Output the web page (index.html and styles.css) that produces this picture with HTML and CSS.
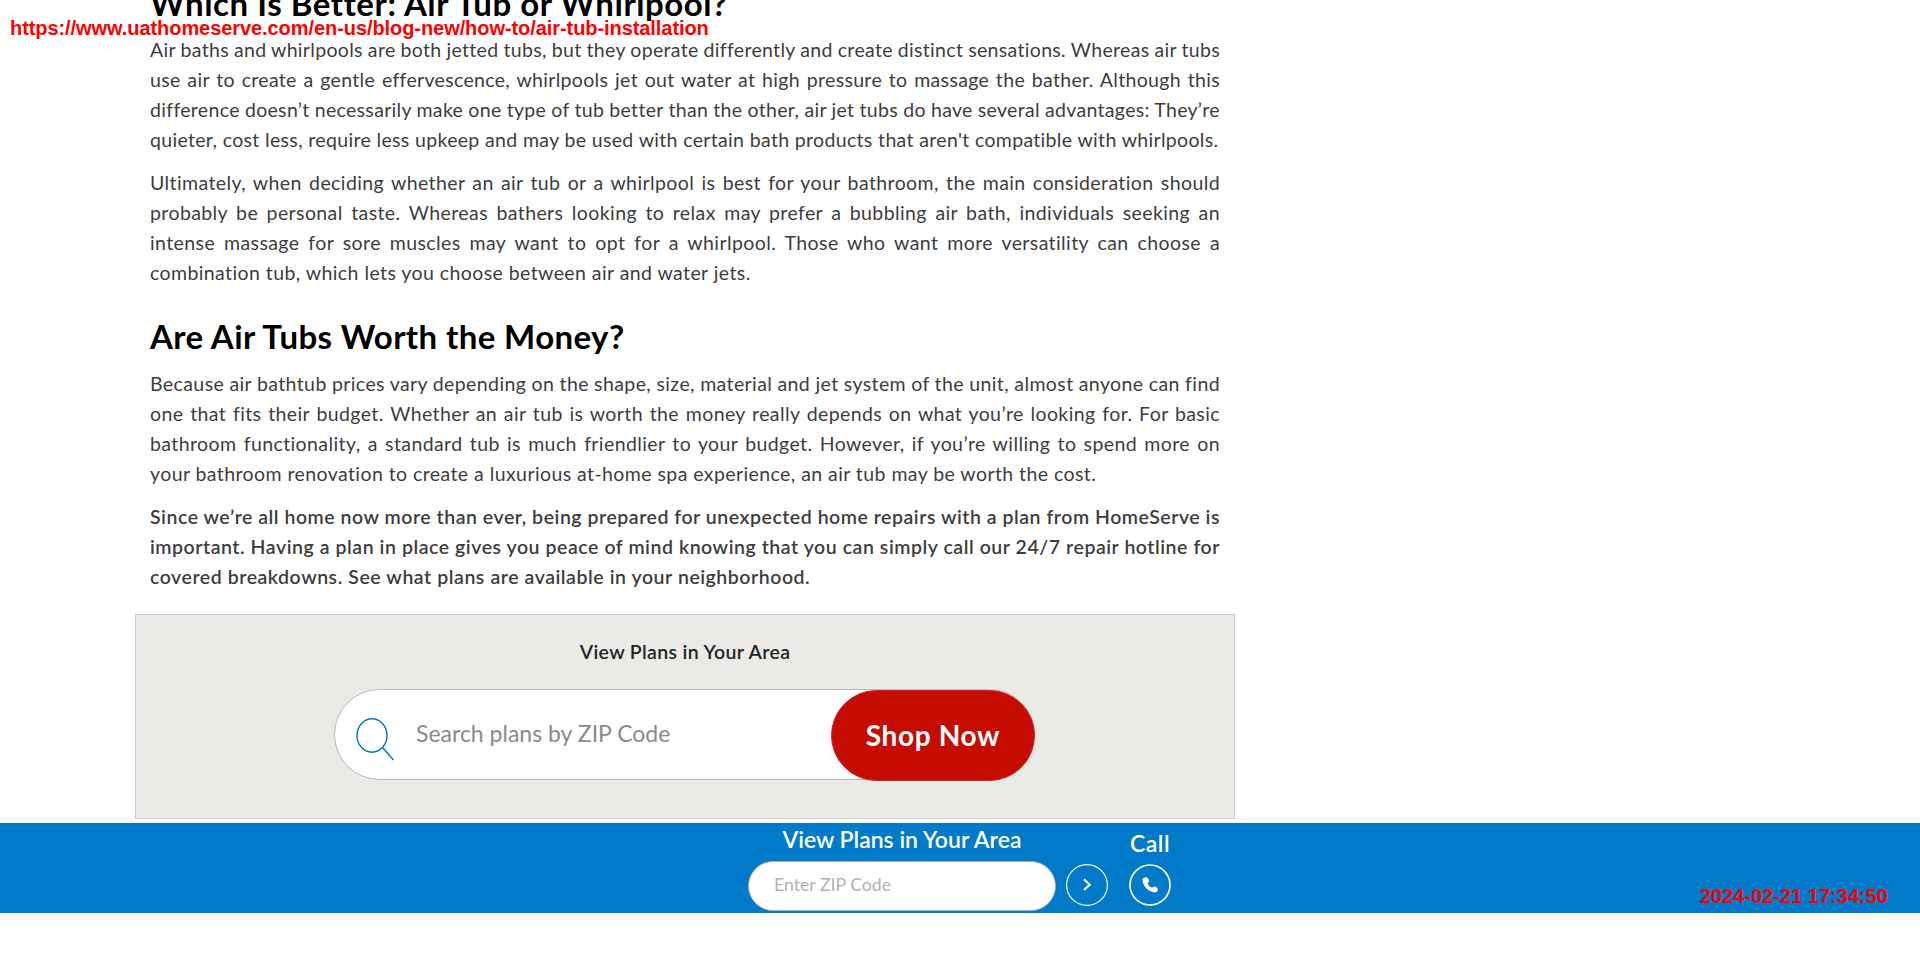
FILE: index.html
```
<!DOCTYPE html>
<html lang="en">
<head>
<meta charset="utf-8">
<title>Air Tub Installation</title>
<link rel="stylesheet" href="styles.css">
</head>
<body>
<main class="article">
<h2 class="heading heading-first">Which Is Better: Air Tub or Whirlpool?</h2>
<p class="copy copy-tight"><span class="line">Air baths and whirlpools are both jetted tubs, but they operate differently and create distinct sensations. Whereas air tubs</span> <span class="line">use air to create a gentle effervescence, whirlpools jet out water at high pressure to massage the bather. Although this</span> <span class="line">difference doesn’t necessarily make one type of tub better than the other, air jet tubs do have several advantages: They’re</span> <span class="line last">quieter, cost less, require less upkeep and may be used with certain bath products that aren't compatible with whirlpools.</span></p>
<p class="copy"><span class="line">Ultimately, when deciding whether an air tub or a whirlpool is best for your bathroom, the main consideration should</span> <span class="line">probably be personal taste. Whereas bathers looking to relax may prefer a bubbling air bath, individuals seeking an</span> <span class="line">intense massage for sore muscles may want to opt for a whirlpool. Those who want more versatility can choose a</span> <span class="line last">combination tub, which lets you choose between air and water jets.</span></p>
<h2 class="heading">Are Air Tubs Worth the Money?</h2>
<p class="copy"><span class="line">Because air bathtub prices vary depending on the shape, size, material and jet system of the unit, almost anyone can find</span> <span class="line">one that fits their budget. Whether an air tub is worth the money really depends on what you’re looking for. For basic</span> <span class="line">bathroom functionality, a standard tub is much friendlier to your budget. However, if you’re willing to spend more on</span> <span class="line last">your bathroom renovation to create a luxurious at-home spa experience, an air tub may be worth the cost.</span></p>
<p class="copy strong"><span class="line">Since we’re all home now more than ever, being prepared for unexpected home repairs with a plan from HomeServe is</span> <span class="line">important. Having a plan in place gives you peace of mind knowing that you can simply call our 24/7 repair hotline for</span> <span class="line last">covered breakdowns. See what plans are available in your neighborhood.</span></p>
<section class="plans">
<h3 class="plans-title">View Plans in Your Area</h3>
<div class="search">
<svg class="search-icon" width="40" height="44" viewBox="0 0 40 44"><ellipse cx="17" cy="17.500" rx="15" ry="16.700"/><path d="M27.500 29.500 38.500 42"/></svg>
<span class="search-hint">Search plans by ZIP Code</span>
<button class="shop">Shop Now</button>
</div>
</section>
</main>
<footer class="bar">
<div class="bar-form">
<span class="bar-title">View Plans in Your Area</span>
<div class="zip"><span class="zip-hint">Enter ZIP Code</span></div>
</div>
<svg class="go" width="42" height="42" viewBox="0 0 42 42"><circle cx="21" cy="21" r="20.400" stroke-width="1.200"/><path d="M18 15.300 23.700 20.700 18 26.100" stroke-width="2.100"/></svg>
<div class="call">
<span class="call-title">Call</span>
<svg class="phone" width="42" height="42" viewBox="0 0 42 42"><circle cx="21" cy="21" r="20" stroke-width="1.600"/><path class="solid" d="M13.500 16.500C13.300 14.300 15 13.200 16.800 13.200 19 13.200 20.600 16 19.800 17.800 19.400 18.700 18.600 18.900 18.800 19.800 19.400 21.600 21 23 22.600 23.600 23.600 23.800 24 22.700 25.200 22.500 27 22.300 29.200 24.200 28.900 26 28.600 27.800 26.500 28.600 24.500 28.200 18.800 27 14 22 13.500 16.500Z"/></svg>
</div>
</footer>
<div class="stamp stamp-url">https://www.uathomeserve.com/en-us/blog-new/how-to/air-tub-installation</div>
<div class="stamp stamp-time">2024-02-21 17:34:50</div>
</body>
</html>
```
FILE: styles.css
```
* { box-sizing: border-box; }
body { margin: 0; width: 1920px; height: 963px; overflow: hidden; position: relative; background: #fff; font-family: Lato, "Open Sans", sans-serif; }
.article { display: flow-root; width: 1100px; margin-left: 135px; height: 823px; }
.heading { margin: 0 15px; height: 51px; line-height: 40px; padding-top: 15px; margin-bottom: 17px; font-size: 33px; font-weight: 700; color: #000; white-space: nowrap; letter-spacing: 0.4px; }
.heading-first { margin-top: -17px; height: 52px; margin-bottom: 0; padding-top: 0; letter-spacing: 0.55px; }
.copy { margin: 0 15px 13px; font-size: 19.5px; line-height: 30px; color: #3d3d3d; letter-spacing: 0.4px; word-spacing: -0.3px; }
.copy-tight { letter-spacing: 0.32px; word-spacing: -0.4px; }
.copy .last { word-spacing: 0.15px; }
.strong { font-weight: 600; letter-spacing: 0.53px; }
.line { display: block; white-space: nowrap; text-align: justify; text-align-last: justify; }
.last { text-align-last: left; }
.plans { height: 205px; margin-top: 22px; border: 1px solid #ccc; background: #ebeae6; display: flex; flex-direction: column; align-items: center; }
.plans-title { margin: 21px 0 0; height: 53px; font-size: 19.500px; line-height: 32px; font-weight: 600; color: #212529; letter-spacing: 0.35px; }
.search { width: 701px; height: 91px; margin-right: 1px; border: 1px solid #b8b8b8; border-radius: 46px; background: #fff; display: flex; align-items: center; }
.search-icon { margin: 11px 0 0 20px; fill: none; stroke: #0077bd; stroke-width: 1.4; }
.search-hint { margin-left: 21px; width: 415px; font-size: 23px; color: #8a8a8a; margin-top: -3px; white-space: nowrap; }
.shop { width: 204px; height: 91px; margin: 2px -1px 0 0; flex: none; border: 1px solid #d2232e; border-radius: 46px; background: #c60b00; color: #fff; font: 700 28px Lato, sans-serif; padding: 0 0 1px; letter-spacing: 0.65px; }
.bar { height: 90px; background: #007ac9; display: flex; padding-left: 748px; color: #fff; }
.bar-form { width: 308px; text-align: center; }
.bar-title { display: block; height: 38px; line-height: 33px; font-size: 23px; font-weight: 600; white-space: nowrap; }
.zip { height: 50px; border: 1px solid #aaa; border-radius: 25px; background: #fff; text-align: left; padding-left: 25px; }
.zip-hint { font-size: 17.700px; line-height: 46px; color: #b2b2b2; }
.go { margin: 41px 0 0 10px; fill: none; stroke: #fff; }
.call { margin-left: 21px; width: 42px; text-align: center; }
.call-title { display: block; height: 41px; line-height: 41px; font-size: 23px; font-weight: 600; letter-spacing: 0.5px; }
.phone { display: block; fill: none; stroke: #fff; }
.solid { fill: #fff; stroke: none; }
.stamp { position: absolute; color: #f00; font: bold 20px/24px "Liberation Sans", Arial, sans-serif; white-space: nowrap; }
.stamp-url { left: 10px; top: 16px; letter-spacing: -0.07px; }
.stamp-time { left: 1700px; top: 884px; }
```
